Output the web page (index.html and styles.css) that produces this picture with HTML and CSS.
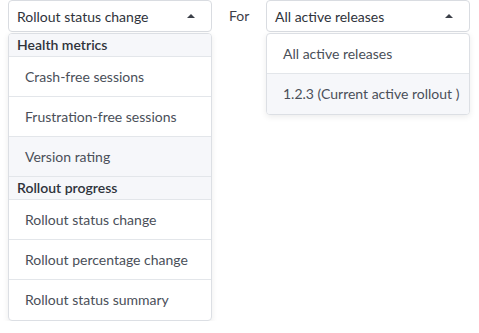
FILE: index.html
```html
<!DOCTYPE html>
<html lang="en">
<head>
    <meta charset="UTF-8">
    <title>Rollout alerts</title>
    <link rel="stylesheet" href="styles.css">
</head>
<body>
    <div class="row">
        <div class="picker metric">
            <div class="select">
                <span>Rollout status change</span>
                <span class="caret"></span>
            </div>
            <div class="menu">
                <div class="group">Health metrics</div>
                <div class="item">Crash-free sessions</div>
                <div class="item">Frustration-free sessions</div>
                <div class="item hover">Version rating</div>
                <div class="group">Rollout progress</div>
                <div class="item">Rollout status change</div>
                <div class="item">Rollout percentage change</div>
                <div class="item">Rollout status summary</div>
            </div>
        </div>
        <label class="for">For</label>
        <div class="picker release">
            <div class="select">
                <span>All active releases</span>
                <span class="caret"></span>
            </div>
            <div class="menu">
                <div class="item">All active releases</div>
                <div class="item hover">1.2.3 (Current active rollout )</div>
            </div>
        </div>
    </div>
</body>
</html>
```

FILE: styles.css
```css
body {
    margin: 0;
    padding: 0 8px;
    background: #fff;
    font-family: Lato, "Open Sans", sans-serif;
    font-size: 14px;
    color: #3c4049;
}
.row {
    display: flex;
    align-items: flex-start;
}
.picker {
    width: 204px;
}
.select {
    box-sizing: border-box;
    height: 32px;
    border: 1px solid #d9dce1;
    border-radius: 4px;
    display: flex;
    align-items: center;
    justify-content: space-between;
    padding: 0 16px 0 8px;
    color: #2f333b;
}
.caret {
    width: 0;
    height: 0;
    border-left: 4px solid transparent;
    border-right: 4px solid transparent;
    border-bottom: 4px solid #3c4049;
    margin-bottom: 1px;
}
.menu {
    margin-top: 1px;
    border: 1px solid #dcdfe4;
    border-radius: 4px;
    box-shadow: 0 2px 6px rgba(0, 0, 0, 0.08);
    overflow: hidden;
    background: #fff;
}
.group {
    box-sizing: border-box;
    height: 23px;
    line-height: 22px;
    padding: 0 8px;
    background: #f6f7fa;
    border-bottom: 1px solid #e3e6ea;
    color: #2f333b;
    font-weight: 600;
}
.item {
    box-sizing: border-box;
    height: 40px;
    line-height: 39px;
    padding: 0 8px 0 16px;
    border-bottom: 1px solid #e3e6ea;
    color: #4a4f59;
    white-space: nowrap;
}
.item:last-child {
    border-bottom: none;
}
.item.hover {
    background: #f6f7fa;
}
.for {
    width: 54px;
    padding-left: 17px;
    box-sizing: border-box;
    line-height: 32px;
    color: #3c4049;
}
```
